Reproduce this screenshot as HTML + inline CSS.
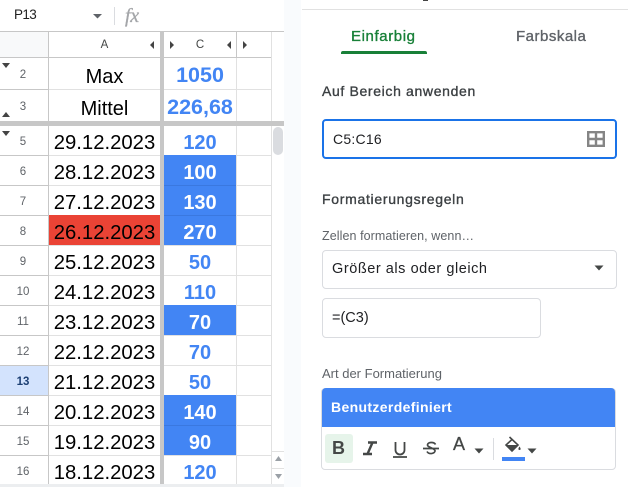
<!DOCTYPE html>
<html><head><meta charset="utf-8">
<style>
html,body{margin:0;padding:0;width:628px;height:487px;overflow:hidden;background:#fff}
body{position:relative;font-family:"Liberation Sans",sans-serif;color:#000}
div,span,svg{position:absolute;box-sizing:border-box}
.l{background:#e1e1e1}
.k{background:#c7c7c7}
.c{text-align:center;white-space:nowrap}
.rn{left:0;width:46px;text-align:center;font-size:11.5px;color:#5f6368;line-height:14px}
.d{left:49px;width:111px;text-align:center;font-size:20.3px;line-height:24px;white-space:nowrap}
.n{left:164px;width:72px;text-align:center;font-size:20px;font-weight:bold;line-height:24px;color:#4285f4;white-space:nowrap}
.b{left:164px;width:72px;background:#4285f4}
.w{color:#fff}
.t{white-space:nowrap;color:#3c4043;-webkit-text-stroke:.35px currentColor}
.s{white-space:nowrap;color:#5f6368;font-size:12.5px;line-height:16px}
.box{border:1px solid #dadce0;border-radius:4px;background:#fff}
</style></head><body>

<!-- grid surroundings -->
<div style="left:284px;top:0;width:17px;height:487px;background:#f9fbfd"></div>
<div style="left:0;top:0;width:284px;height:31px;background:#fff"></div>
<div class="c" style="left:14px;top:6px;font-size:13.500px;line-height:18px;color:#1f1f1f;letter-spacing:-.6px">P13</div>
<svg style="left:93px;top:13px" width="9" height="6"><path d="M0 1h9L4.500 5.500z" fill="#5f6368"/></svg>
<div style="left:114px;top:7px;width:1px;height:18px;background:#dadce0"></div>
<div style="left:125px;top:5px;font:italic 20px/22px 'Liberation Serif',serif;color:#a4a6a9;letter-spacing:-.3px;-webkit-text-stroke:.3px #a4a6a9">fx</div>
<div class="k" style="left:0;top:31px;width:284px;height:1px"></div>

<!-- header row -->
<div style="left:0;top:32px;width:48px;height:25px;background:#f8f9fa"></div>
<div style="left:272px;top:32px;width:12px;height:94px;background:#fff"></div>
<div class="c" style="left:49px;width:111px;top:38px;font-size:11.5px;line-height:14px;color:#444746">A</div>
<div class="c" style="left:164px;width:72px;top:38px;font-size:11.5px;line-height:14px;color:#444746">C</div>
<svg style="left:149px;top:40px" width="6" height="10"><path d="M5 1v8L1 5z" fill="#444"/></svg>
<svg style="left:169px;top:40px" width="6" height="10"><path d="M1 1v8l4-4z" fill="#444"/></svg>
<svg style="left:226px;top:40px" width="6" height="10"><path d="M5 1v8L1 5z" fill="#444"/></svg>
<svg style="left:242px;top:40px" width="6" height="10"><path d="M1 1v8l4-4z" fill="#444"/></svg>
<div class="k" style="left:0;top:57px;width:271px;height:1px"></div>

<!-- blue fills -->
<div class="b" style="top:155px;height:90px"></div>
<div class="b" style="top:305px;height:30px"></div>
<div class="b" style="top:395px;height:60px"></div>
<div style="left:49px;top:215px;width:111px;height:30px;background:#ea4335"></div>
<div style="left:0;top:365px;width:48px;height:30px;background:#d3e3fd"></div>

<!-- horizontal lines -->
<div class="k" style="left:0;top:89px;width:48px;height:1px"></div>
<div class="l" style="left:49px;top:89px;width:222px;height:1px"></div>
<div class="k" style="left:0;top:121px;width:284px;height:5px"></div>
<div class="k" style="left:0;top:155px;width:48px;height:1px"></div>
<div class="k" style="left:0;top:185px;width:48px;height:1px"></div>
<div class="k" style="left:0;top:215px;width:48px;height:1px"></div>
<div class="k" style="left:0;top:245px;width:48px;height:1px"></div>
<div class="k" style="left:0;top:275px;width:48px;height:1px"></div>
<div class="k" style="left:0;top:305px;width:48px;height:1px"></div>
<div class="k" style="left:0;top:335px;width:48px;height:1px"></div>
<div class="k" style="left:0;top:365px;width:48px;height:1px"></div>
<div class="k" style="left:0;top:395px;width:48px;height:1px"></div>
<div class="k" style="left:0;top:425px;width:48px;height:1px"></div>
<div class="k" style="left:0;top:455px;width:48px;height:1px"></div>
<div class="l" style="left:49px;top:155px;width:115px;height:1px"></div>
<div class="l" style="left:236px;top:155px;width:35px;height:1px"></div>
<div class="l" style="left:49px;top:185px;width:222px;height:1px"></div>
<div class="l" style="left:49px;top:215px;width:222px;height:1px"></div>
<div class="l" style="left:49px;top:245px;width:222px;height:1px"></div>
<div class="l" style="left:49px;top:275px;width:222px;height:1px"></div>
<div class="l" style="left:49px;top:305px;width:115px;height:1px"></div>
<div class="l" style="left:236px;top:305px;width:35px;height:1px"></div>
<div class="l" style="left:49px;top:335px;width:222px;height:1px"></div>
<div class="l" style="left:49px;top:365px;width:222px;height:1px"></div>
<div class="l" style="left:49px;top:395px;width:115px;height:1px"></div>
<div class="l" style="left:236px;top:395px;width:35px;height:1px"></div>
<div class="l" style="left:49px;top:425px;width:222px;height:1px"></div>
<div class="l" style="left:49px;top:455px;width:222px;height:1px"></div>
<div style="left:0;top:484px;width:284px;height:3px;background:#eceef0"></div>
<div style="left:164px;top:185px;width:72px;height:1px;background:#3a78e0"></div>
<div style="left:164px;top:215px;width:72px;height:1px;background:#3a78e0"></div>
<div style="left:164px;top:425px;width:72px;height:1px;background:#3a78e0"></div>
<div style="left:49px;top:215px;width:111px;height:1px;background:#ea4335"></div>

<!-- vertical lines -->
<div class="k" style="left:48px;top:32px;width:1px;height:452px"></div>
<div class="k" style="left:160px;top:32px;width:4px;height:452px"></div>
<div class="k" style="left:236px;top:32px;width:1px;height:25px"></div>
<div class="l" style="left:236px;top:58px;width:1px;height:426px"></div>
<div class="l" style="left:271px;top:32px;width:1px;height:452px"></div>
<div class="k" style="left:0;top:121px;width:284px;height:5px"></div>
<div style="left:273px;top:127px;width:10px;height:28px;border-radius:5px;background:#dadce0"></div>
<div class="l" style="left:272px;top:451px;width:12px;height:1px"></div>
<div class="l" style="left:272px;top:468px;width:12px;height:1px"></div>
<svg style="left:274px;top:455px" width="9" height="7"><path d="M1 6h7L4.500 1z" fill="#9aa0a6"/></svg>
<svg style="left:274px;top:473px" width="9" height="7"><path d="M1 1h7L4.500 6z" fill="#9aa0a6"/></svg>

<!-- freeze / group arrows -->
<svg style="left:1px;top:62px" width="11" height="7"><path d="M1 1h8L5 6z" fill="#444"/></svg>
<svg style="left:1px;top:111px" width="11" height="7"><path d="M1 6h8L5 1z" fill="#444"/></svg>
<svg style="left:1px;top:130px" width="11" height="7"><path d="M1 1h8L5 6z" fill="#444"/></svg>

<!-- row numbers -->
<div class="rn" style="top:68px">2</div>
<div class="rn" style="top:100px">3</div>
<div class="rn" style="top:135px">5</div>
<div class="rn" style="top:165px">6</div>
<div class="rn" style="top:195px">7</div>
<div class="rn" style="top:225px">8</div>
<div class="rn" style="top:255px">9</div>
<div class="rn" style="top:285px">10</div>
<div class="rn" style="top:315px">11</div>
<div class="rn" style="top:345px">12</div>
<div class="rn" style="top:375px;font-weight:bold;color:#1c3f73">13</div>
<div class="rn" style="top:405px">14</div>
<div class="rn" style="top:435px">15</div>
<div class="rn" style="top:465px">16</div>

<!-- column A -->
<div class="d" style="top:65px;font-size:20px">Max</div>
<div class="d" style="top:97px;font-size:20px">Mittel</div>
<div class="d" style="top:131px">29.12.2023</div>
<div class="d" style="top:161px">28.12.2023</div>
<div class="d" style="top:191px">27.12.2023</div>
<div class="d" style="top:221px">26.12.2023</div>
<div class="d" style="top:251px">25.12.2023</div>
<div class="d" style="top:281px">24.12.2023</div>
<div class="d" style="top:311px">23.12.2023</div>
<div class="d" style="top:341px">22.12.2023</div>
<div class="d" style="top:371px">21.12.2023</div>
<div class="d" style="top:401px">20.12.2023</div>
<div class="d" style="top:431px">19.12.2023</div>
<div class="d" style="top:461px">18.12.2023</div>

<!-- column C -->
<div class="n" style="top:63px;font-size:21.5px">1050</div>
<div class="n" style="top:95px;font-size:21.5px">226,68</div>
<div class="n" style="top:131px">120</div>
<div class="n w" style="top:161px">100</div>
<div class="n w" style="top:191px">130</div>
<div class="n w" style="top:221px">270</div>
<div class="n" style="top:251px">50</div>
<div class="n" style="top:281px">110</div>
<div class="n w" style="top:311px">70</div>
<div class="n" style="top:341px">70</div>
<div class="n" style="top:371px">50</div>
<div class="n w" style="top:401px">140</div>
<div class="n w" style="top:431px">90</div>
<div class="n" style="top:461px">120</div>

<!-- side panel -->
<div style="left:301px;top:0;width:327px;height:487px;background:#fff"></div>
<div class="l" style="left:302px;top:9px;width:326px;height:1px"></div>
<div style="left:423px;top:0;width:5px;height:1px;background:#444"></div>

<div class="t" style="left:351px;top:28px;font-size:15px;line-height:18px;letter-spacing:.6px;color:#188038">Einfarbig</div>
<div style="left:341px;top:51px;width:86px;height:3px;background:#188038;border-radius:2px 2px 0 0"></div>
<div class="t" style="left:516px;top:28px;font-size:15px;line-height:18px;letter-spacing:.5px;color:#5f6368">Farbskala</div>

<div class="t" style="left:322px;top:82px;font-size:14px;line-height:18px;letter-spacing:.65px">Auf Bereich anwenden</div>
<div style="left:322px;top:119px;width:295px;height:40px;border:2px solid #1a73e8;border-radius:4px"></div>
<div style="left:333px;top:130px;font-size:14px;line-height:18px;color:#202124;letter-spacing:.25px;white-space:nowrap">C5:C16</div>
<svg style="left:587px;top:131px" width="18" height="16"><path d="M1.200 1.200h15.600v13.600H1.200zM9 1v14M1 8h16" fill="none" stroke="#858585" stroke-width="2.400"/></svg>

<div class="t" style="left:322px;top:190px;font-size:14px;line-height:18px;letter-spacing:.7px">Formatierungsregeln</div>
<div class="s" style="left:322px;top:228px;letter-spacing:.08px">Zellen formatieren, wenn…</div>
<div class="box" style="left:322px;top:250px;width:295px;height:39px"></div>
<div style="left:332px;top:260px;font-size:14.5px;line-height:18px;color:#202124;letter-spacing:.55px;white-space:nowrap">Größer als oder gleich</div>
<svg style="left:594px;top:265px" width="10" height="6"><path d="M.5 .5h9L5 5.500z" fill="#444746"/></svg>
<div class="box" style="left:322px;top:298px;width:219px;height:40px"></div>
<div style="left:332px;top:309px;font-size:14.5px;line-height:18px;color:#202124;white-space:nowrap">=(C3)</div>

<div class="s" style="left:322px;top:366px;font-size:13px">Art der Formatierung</div>
<div class="box" style="left:321px;top:388px;width:295px;height:82px"></div>
<div style="left:322px;top:388px;width:293px;height:39px;background:#4285f4;border-radius:4px 4px 0 0"></div>
<div style="left:331px;top:398px;font-size:14px;font-weight:bold;line-height:18px;color:#fff;letter-spacing:.35px;white-space:nowrap">Benutzerdefiniert</div>

<div style="left:325px;top:434px;width:28px;height:29px;background:#e6f4ea;border-radius:3px"></div>
<div style="left:330px;top:438px;font-size:18px;font-weight:bold;line-height:20px;color:#444746;width:17px;text-align:center">B</div>
<svg style="left:362px;top:440px" width="16" height="16"><path d="M6 2.500h9M1 14h9M10.500 2.500 5.500 14" fill="none" stroke="#444746" stroke-width="2.400"/></svg>
<svg style="left:392px;top:440px" width="16" height="19"><path d="M3.500 2v8a4.500 4.500 0 0 0 9 0V2M1 17h14" fill="none" stroke="#444746" stroke-width="1.800"/></svg>
<svg style="left:422px;top:441px" width="18" height="15"><path d="M13.500 3.500C12 .5 5.500 1 5.500 4c-.3 2 6.500 3 7.500 5.500.7 3-6 4.500-8 1M1 7.500h16" fill="none" stroke="#444746" stroke-width="1.700"/></svg>
<div style="left:453px;top:434px;font-size:18px;line-height:20px;color:#444746;-webkit-text-stroke:.3px #444746">A</div>
<svg style="left:474px;top:448px" width="10" height="6"><path d="M.5 .5h9L5 5.500z" fill="#444746"/></svg>
<div style="left:493px;top:438px;width:1px;height:22px;background:#dadce0"></div>
<svg style="left:504px;top:435px" width="20" height="19"><path d="M5.500 2 14 10l-6 6-6-6 6.500-6" fill="none" stroke="#444746" stroke-width="1.600"/><path d="M2 10h12l-6 6z" fill="#444746"/><path d="M15.500 11.500c-1.500 2-1.500 3.500 0 3.500s1.500-1.500 0-3.500z" fill="#444746"/></svg>
<div style="left:502px;top:457px;width:23px;height:4px;background:#4285f4"></div>
<svg style="left:527px;top:448px" width="10" height="6"><path d="M.5 .5h9L5 5.500z" fill="#444746"/></svg>
</body></html>
